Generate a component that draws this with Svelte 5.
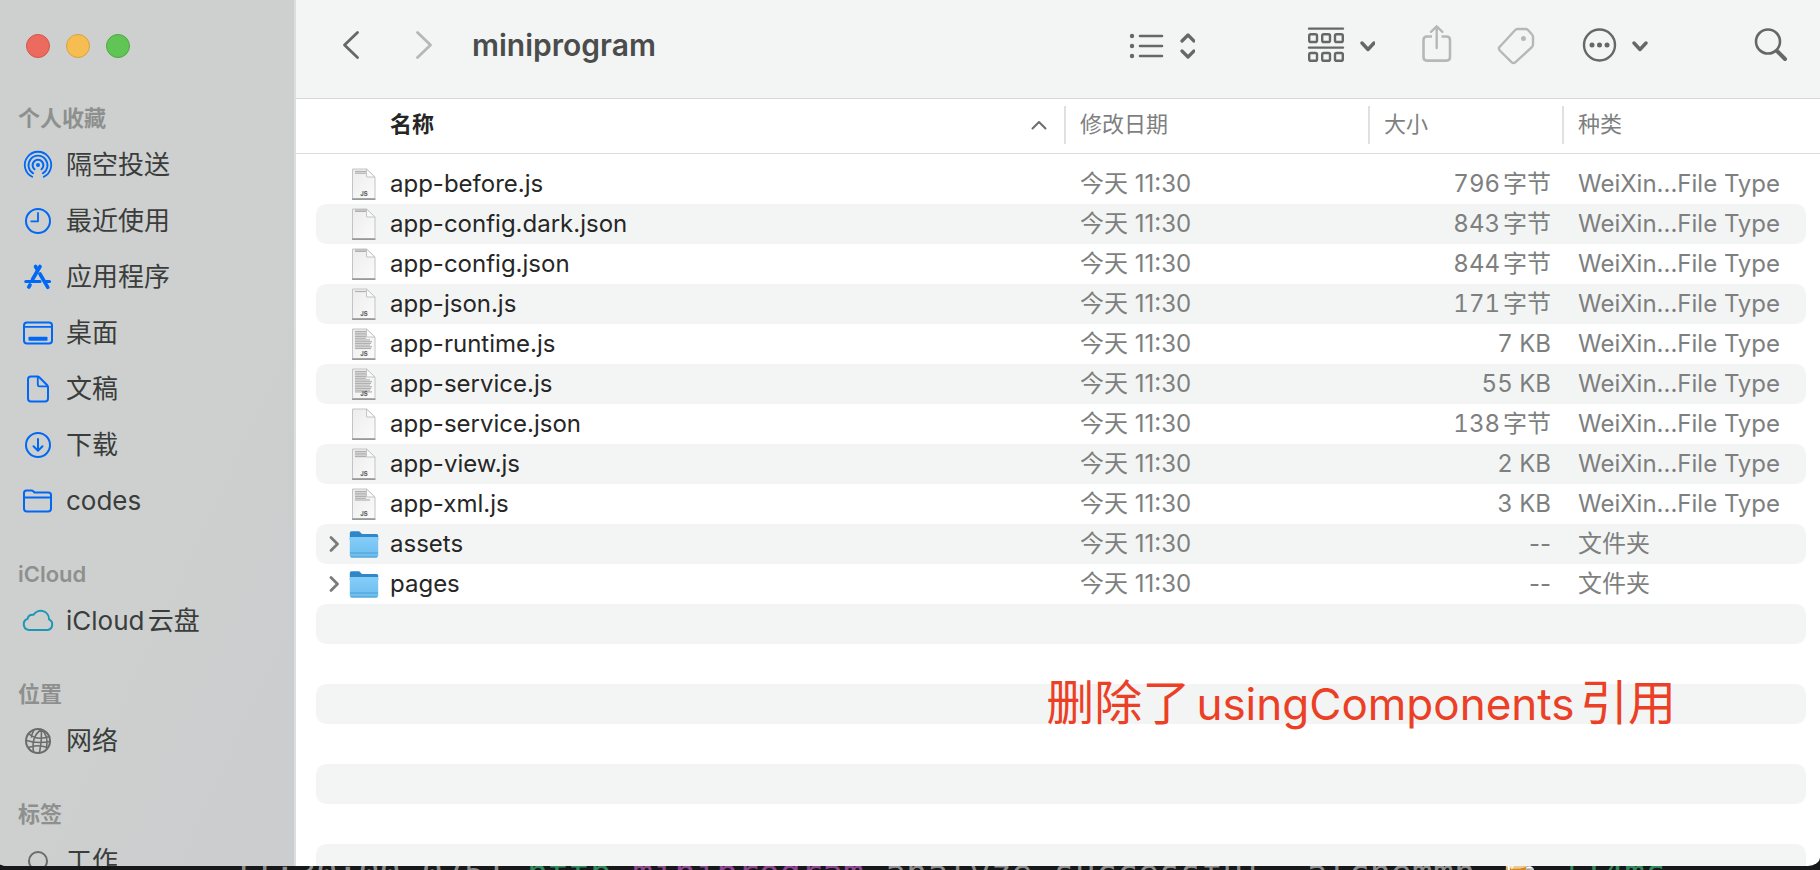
<script lang="ts">
	interface SidebarItem {
		icon: string
		label: string
	}

	interface SidebarSection {
		title: string
		items: SidebarItem[]
	}

	interface Entry {
		name: string
		type: 'js' | 'json' | 'folder'
		lines?: number
		modified: string
		size: string
		kind: string
	}

	const sections: SidebarSection[] = [
		{
			title: '个人收藏',
			items: [
				{ icon: 'airdrop', label: '隔空投送' },
				{ icon: 'recents', label: '最近使用' },
				{ icon: 'apps', label: '应用程序' },
				{ icon: 'desktop', label: '桌面' },
				{ icon: 'documents', label: '文稿' },
				{ icon: 'downloads', label: '下载' },
				{ icon: 'folder', label: 'codes' },
			],
		},
		{ title: 'iCloud', items: [{ icon: 'cloud', label: 'iCloud云盘' }] },
		{ title: '位置', items: [{ icon: 'network', label: '网络' }] },
		{ title: '标签', items: [{ icon: 'tag', label: '工作' }] },
	]

	const today = '今天 11:30'
	const wxType = 'WeiXin...File Type'

	const entries: Entry[] = [
		{ name: 'app-before.js', type: 'js', lines: 2, modified: today, size: '796字节', kind: wxType },
		{ name: 'app-config.dark.json', type: 'json', lines: 2, modified: today, size: '843字节', kind: wxType },
		{ name: 'app-config.json', type: 'json', lines: 2, modified: today, size: '844字节', kind: wxType },
		{ name: 'app-json.js', type: 'js', lines: 1, modified: today, size: '171字节', kind: wxType },
		{ name: 'app-runtime.js', type: 'js', lines: 11, modified: today, size: '7 KB', kind: wxType },
		{ name: 'app-service.js', type: 'js', lines: 13, modified: today, size: '55 KB', kind: wxType },
		{ name: 'app-service.json', type: 'json', lines: 0, modified: today, size: '138字节', kind: wxType },
		{ name: 'app-view.js', type: 'js', lines: 4, modified: today, size: '2 KB', kind: wxType },
		{ name: 'app-xml.js', type: 'js', lines: 6, modified: today, size: '3 KB', kind: wxType },
		{ name: 'assets', type: 'folder', modified: today, size: '--', kind: '文件夹' },
		{ name: 'pages', type: 'folder', modified: today, size: '--', kind: '文件夹' },
	]

	// blank striped rows below the last entry
	const fillerRows = Array.from({ length: 7 })
</script>

<div class="screen">
	<div class="window">
		<aside class="sidebar">
			<div class="lights">
				<button class="light close" aria-label="关闭"></button>
				<button class="light minimize" aria-label="最小化"></button>
				<button class="light zoom" aria-label="缩放"></button>
			</div>
			<nav>
				{#each sections as section}
					<section>
						<h2>{section.title}</h2>
						<ul>
							{#each section.items as item}
								<li>
									<a href="#{item.icon}">
										{@render sidebarIcon(item.icon)}
										<span>{item.label}</span>
									</a>
								</li>
							{/each}
						</ul>
					</section>
				{/each}
			</nav>
		</aside>

		<main>
			<header class="toolbar">
				<div class="history">
					<button aria-label="后退">
						<svg class="icon" width="18" height="44" viewBox="0 0 18 44">
							<path d="M15.5 9.5 L2.5 22 L15.5 34.5" stroke-width="2.8" />
						</svg>
					</button>
					<button aria-label="前进" disabled>
						<svg class="icon" width="18" height="44" viewBox="0 0 18 44">
							<path d="M2.5 9.5 L15.5 22 L2.5 34.5" stroke-width="2.8" />
						</svg>
					</button>
				</div>
				<h1>miniprogram</h1>
				<button class="view" aria-label="列表显示">
					<svg class="icon" width="66" height="44" viewBox="0 0 66 44">
						<g fill="currentColor" stroke="none">
							<circle cx="3" cy="13" r="2.2" />
							<circle cx="3" cy="23" r="2.2" />
							<circle cx="3" cy="33" r="2.2" />
						</g>
						<path d="M11 13 H33 M11 23 H33 M11 33 H33" stroke-width="2.6" />
						<path d="M53 18 L59 12 L65 18 M53 28 L59 34 L65 28" stroke-width="3.2" />
					</svg>
				</button>
				<div class="actions">
					<button aria-label="分组">
						<svg class="icon" width="68" height="44" viewBox="0 0 68 44">
							<path d="M2 5.6 H36 M2 24.6 H36" stroke-width="2.4" />
							<g stroke-width="2.4">
								{#each [11.2, 30] as y}
									{#each [2.2, 15.2, 28] as x}
										<rect {x} {y} width="7.8" height="7.8" rx="1.6" />
									{/each}
								{/each}
							</g>
							<path d="M55 20 L61 26.5 L67 20" stroke-width="3.4" />
						</svg>
					</button>
					<button aria-label="共享" disabled>
						<svg class="icon" width="32" height="44" viewBox="0 0 32 44">
							<path
								d="M12 13.5 H7 Q3.5 13.5 3.5 17 V34 Q3.5 37.6 7 37.6 H26.5 Q30 37.6 30 34 V17 Q30 13.5 26.5 13.5 H21.5"
								stroke-width="2.6"
								stroke-linecap="butt"
							/>
							<path d="M16.7 3.5 V25 M11 8.8 L16.7 3.3 L22.4 8.8" stroke-width="2.4" />
						</svg>
					</button>
					<button aria-label="标签" disabled>
						<svg class="icon" width="40" height="44" viewBox="0 0 40 44">
							<path
								d="M20.5 6 H28.5 Q30 6 31 7 L35 11.5 Q36 12.5 36 14 V21.5 Q36 23 35 24 L18.5 39.2 Q16.5 41 14.5 39.2 L2.8 27.5 Q1 25.5 2.8 23.7 L18 7.2 Q19 6 20.5 6 Z"
								stroke-width="2.4"
							/>
							<circle cx="26.5" cy="15.5" r="2.5" fill="currentColor" stroke="none" />
						</svg>
					</button>
					<button aria-label="操作">
						<svg class="icon" width="66" height="44" viewBox="0 0 66 44">
							<circle cx="17.5" cy="22" r="15.5" stroke-width="2.4" />
							<g fill="currentColor" stroke="none">
								<circle cx="10" cy="22" r="2.5" />
								<circle cx="17.5" cy="22" r="2.5" />
								<circle cx="25" cy="22" r="2.5" />
							</g>
							<path d="M52 20 L58 26.5 L64 20" stroke-width="3.4" />
						</svg>
					</button>
				</div>
				<button class="search" aria-label="搜索">
					<svg class="icon" width="34" height="44" viewBox="0 0 34 44">
						<circle cx="14" cy="18.5" r="12" stroke-width="2.6" />
						<path d="M23 28 L31 36" stroke-width="4" />
					</svg>
				</button>
			</header>

			<table>
				<thead>
					<tr>
						<th class="col-name" aria-sort="ascending">
							<div class="head">
								<span>名称</span>
								<svg class="icon" width="18" height="12" viewBox="0 0 18 12">
									<path d="M2.5 10.5 L9 4 L15.5 10.5" />
								</svg>
							</div>
						</th>
						<th class="col-date"><div class="head">修改日期</div></th>
						<th class="col-size"><div class="head">大小</div></th>
						<th class="col-kind"><div class="head">种类</div></th>
					</tr>
				</thead>
				<tbody>
					{#each entries as entry}
						<tr>
							<td>
								<div class="name">
									{#if entry.type === 'folder'}
										<button class="disclosure" aria-label="展开 {entry.name}">
											<svg class="icon" width="12" height="20" viewBox="0 0 12 20">
												<path d="M3 3.5 L9.5 10 L3 16.5" stroke-width="2.8" />
											</svg>
										</button>
										{@render folderIcon()}
									{:else}
										<span class="disclosure"></span>
										{@render fileIcon(entry.type === 'js', entry.lines ?? 0)}
									{/if}
									<span>{entry.name}</span>
								</div>
							</td>
							<td>{entry.modified}</td>
							<td class="size" class:numeric={entry.type !== 'folder'}>{entry.size}</td>
							<td>{entry.kind}</td>
						</tr>
					{/each}
					{#each fillerRows as _}
						<tr aria-hidden="true"><td></td><td></td><td></td><td></td></tr>
					{/each}
				</tbody>
			</table>

			<p class="annotation">删除了<span>usingComponents</span>引用</p>
		</main>
	</div>

	<div class="terminal" aria-hidden="true">
		<div class="line">
			<span>11:30:00.0751</span>
			<span class="green">http</span>
			<span class="purple">miniprogram</span>
			<span>analyze successful, alchemmn 🍺</span>
			<span class="green">+14ms</span>
		</div>
	</div>
</div>

{#snippet sidebarIcon(name: string)}
	<svg class="icon side-icon {name}" width="32" height="32" viewBox="0 0 32 32">
		{#if name === 'airdrop'}
			<circle cx="16" cy="16" r="2" fill="currentColor" stroke="none" />
			<path d="M12.5 20.3 A5.4 5.4 0 1 1 19.5 20.3" />
			<path d="M11.2 24.4 A9.5 9.5 0 1 1 20.8 24.4" stroke-width="1.8" />
			<path d="M10.2 27.8 A13.2 13.2 0 1 1 21.8 27.8" stroke-width="1.8" />
		{:else if name === 'recents'}
			<circle cx="16" cy="16" r="12" />
			<path d="M16 7.8 V16.3 H9.2" stroke-width="1.8" />
		{:else if name === 'apps'}
			<path
				d="M18 5.5 L10.5 18.5 M8 24 L6.8 26 M13.5 5.5 L15.5 9 M18 13 L25.8 26.3"
				stroke-width="3.6"
			/>
			<path d="M3.8 20.5 H18 M24 20.5 H27.5" stroke-width="3.2" />
		{:else if name === 'desktop'}
			<rect x="2" y="5.5" width="28" height="21" rx="3" />
			<path d="M2 9.8 H30" stroke-width="1.8" />
			<rect x="6.5" y="19.8" width="19" height="4" rx="0.8" fill="currentColor" stroke="none" />
		{:else if name === 'documents'}
			<path
				d="M9 3.5 H15.5 Q16.5 3.5 17.5 4.5 L25 12 Q26 13 26 14.5 V25.5 Q26 28.5 23 28.5 H9 Q6 28.5 6 25.5 V6.5 Q6 3.5 9 3.5 Z"
			/>
			<path d="M15.8 4 V11.5 Q15.8 13.3 17.5 13.3 H25.5" stroke-width="1.8" />
		{:else if name === 'downloads'}
			<circle cx="16" cy="16" r="12" />
			<path d="M16 10 V21.5 M11.5 17.3 L16 21.8 L20.5 17.3" />
		{:else if name === 'folder'}
			<path
				d="M2 8 Q2 5.5 4.5 5.5 H9.5 Q10.5 5.5 11.5 6.5 L12.5 7.5 H26.5 Q29 7.5 29 10 V23.5 Q29 26.5 26 26.5 H5 Q2 26.5 2 23.5 Z"
			/>
			<path d="M2 12.5 H29" stroke-width="1.8" />
		{:else if name === 'cloud'}
			<path
				d="M6.8 25 A5.8 5.8 0 0 1 5.6 13.8 Q6.5 9.2 11.6 9.8 A8.3 8.3 0 0 1 27 14.4 A5.6 5.6 0 0 1 25.5 25 Z"
			/>
		{:else if name === 'network'}
			<circle cx="16" cy="16" r="12" />
			<path
				d="M19.5 4.5 Q9 11 11.5 27 M19.5 4.5 Q20 16 17.5 28 M12 5 Q9.5 9 9.5 12 M19.5 4.5 Q27 11 24.5 23 M7 9 Q15 16 27.5 11.5 M4.5 15.5 Q15 19 28 16.5 M6.5 22.5 Q15 19 25.5 22.5"
				stroke-width="1.6"
			/>
		{:else}
			<circle cx="16" cy="16" r="9" />
		{/if}
	</svg>
{/snippet}

{#snippet fileIcon(js: boolean, lines: number)}
	<svg class="file" width="30" height="36" viewBox="0 0 30 36">
		<defs>
			<linearGradient id="paper" x1="0" y1="0" x2="1" y2="1">
				<stop offset="0" stop-color="#ececec" />
				<stop offset="1" stop-color="#fbfbfb" />
			</linearGradient>
		</defs>
		<path d="M3.5 3 H17.5 L26 11 V32.5 H3.5 Z" fill="url(#paper)" stroke="#c4c4c4" />
		<path d="M3 33.2 H26.5" stroke="#8f8f8f" stroke-width="1.4" />
		{#each { length: lines } as _, i}
			<path
				d="M6 {js ? 5.5 + i * 1.7 : 4 + i * 1.4} H{i < 5 ? 17 : 23 - (i % 3)}"
				stroke="#b0b0b0"
				stroke-width="1.2"
			/>
		{/each}
		<path d="M17.5 3 V11 H26 Z" fill="#fafafa" stroke="#c4c4c4" />
		{#if js}
			<text x="15" y="29.5" text-anchor="middle">JS</text>
		{/if}
	</svg>
{/snippet}

{#snippet folderIcon()}
	<svg class="file" width="30" height="36" viewBox="0 0 30 36">
		<defs>
			<linearGradient id="folder-front" x1="0" y1="0" x2="0" y2="1">
				<stop offset="0" stop-color="#85cdf9" />
				<stop offset="1" stop-color="#6bbdee" />
			</linearGradient>
		</defs>
		<path
			d="M0.8 7 Q0.8 5.3 2.5 5.3 H9.5 Q10.5 5.3 11.5 6.5 L13 8 H27.5 Q29.2 8 29.2 9.5 V14 H0.8 Z"
			fill="#2f87c9"
		/>
		<path
			d="M0.8 12 Q0.8 11 2 11 H28 Q29.2 11 29.2 12 V29.5 Q29.2 31.4 27.5 31.4 H2.5 Q0.8 31.4 0.8 29.5 Z"
			fill="url(#folder-front)"
		/>
		<path d="M1 27 H29 M2 31 H28" stroke="#4c9fd3" />
	</svg>
{/snippet}

<style>
	:global(body) {
		margin: 0;
		background: #17181a;
	}

	.screen {
		height: 100vh;
		display: flex;
		flex-direction: column;
		overflow: hidden;
		background: #17181a;
		font-family: Inter, 'Noto Sans CJK SC', sans-serif;
		text-autospace: normal;
	}

	.window {
		flex: 1;
		min-height: 0;
		display: flex;
		overflow: hidden;
		background: #fff;
		border-radius: 0 0 12px 12px / 0 0 9px 2px;
	}

	button {
		padding: 0;
		border: 0;
		background: none;
		color: inherit;
		font: inherit;
		display: block;
	}

	.icon {
		display: block;
		fill: none;
		stroke: currentColor;
		stroke-width: 2;
		stroke-linecap: round;
		stroke-linejoin: round;
	}

	.sidebar {
		flex: 0 0 294px;
		overflow: hidden;
		background: linear-gradient(115deg, #cdd0ce 60%, #cccdcf 85%);
		border-right: 2px solid #dcdddd;
	}

	.lights {
		display: flex;
		gap: 16px;
		padding: 34px 26px 41px;
	}

	.light {
		box-sizing: border-box;
		width: 24px;
		height: 24px;
		border-radius: 50%;
	}

	.close {
		background: #ed6a5f;
		border: 1px solid #d5544a;
	}

	.minimize {
		background: #f6be50;
		border: 1px solid #d9a13d;
	}

	.zoom {
		background: #61c555;
		border: 1px solid #4fa73f;
	}

	section {
		margin-bottom: 26px;
	}

	h2 {
		margin: 0;
		padding-left: 18px;
		font-size: 22px;
		line-height: 38px;
		font-weight: 600;
		color: #8e908f;
	}

	ul {
		margin: 0;
		padding: 0;
		list-style: none;
	}

	.sidebar a {
		display: flex;
		align-items: center;
		gap: 12px;
		height: 56px;
		padding-left: 22px;
		font-size: 26px;
		line-height: 32px;
		color: #3b3d3c;
		text-decoration: none;
	}

	.side-icon {
		color: #0068f5;
	}

	.side-icon.cloud {
		color: #1b98b4;
	}

	.side-icon.network,
	.side-icon.tag {
		color: #6a6c6b;
	}

	main {
		flex: 1;
		min-width: 0;
		position: relative;
		overflow: hidden;
	}

	.toolbar {
		box-sizing: border-box;
		height: 99px;
		display: flex;
		align-items: center;
		padding: 0 32px 8px 46px;
		background: #f3f5f4;
		border-bottom: 1px solid #d7d8d8;
		color: #666867;
	}

	.toolbar button:disabled {
		color: #b6b8b7;
	}

	.history {
		display: flex;
		gap: 55px;
	}

	h1 {
		flex: 1;
		margin: 0 0 0 39px;
		font-size: 30px;
		line-height: 36px;
		font-weight: 600;
		color: #4b4d4c;
	}

	.actions {
		display: flex;
		gap: 45px;
		margin: 0 106px 0 112px;
	}

	table {
		width: 100%;
		table-layout: fixed;
		border-spacing: 0;
		font-size: 24px;
		line-height: 30px;
		color: #7e7f7f;
	}

	th {
		box-sizing: border-box;
		height: 55px;
		padding: 7px 0 0;
		border-bottom: 1px solid #dcdcdc;
		font-size: 22px;
		font-weight: 400;
		text-align: left;
		vertical-align: top;
	}

	.col-date {
		width: 304px;
	}

	.col-size {
		width: 194px;
	}

	.col-kind {
		width: 258px;
	}

	.head {
		box-sizing: border-box;
		display: flex;
		align-items: center;
		height: 38px;
		padding: 0 0 2px 14px;
		border-left: 2px solid #e0e0e0;
	}

	.col-name .head {
		justify-content: space-between;
		padding: 0 16px 2px 94px;
		border-left: 0;
		font-weight: 600;
		color: #262626;
	}

	.col-name .icon {
		color: #6d6d6d;
	}

	tbody::before {
		content: '';
		display: table-row;
		height: 10px;
	}

	td {
		box-sizing: border-box;
		height: 40px;
		padding: 0 0 0 16px;
		white-space: nowrap;
	}

	/* transparent side borders keep the stripes off the pane's edges */
	td:first-child {
		padding-left: 12px;
		border-left: 20px solid transparent;
		border-radius: 30px 0 0 30px / 10px;
		background-clip: padding-box;
	}

	td:last-child {
		border-right: 14px solid transparent;
		border-radius: 0 24px 24px 0 / 10px;
		background-clip: padding-box;
	}

	tbody tr:nth-child(even) td {
		background-color: #f3f5f4;
	}

	td.size {
		padding-right: 11px;
		text-align: right;
	}

	td.numeric {
		font-variant-numeric: tabular-nums;
	}

	.name {
		display: flex;
		align-items: center;
		color: #262626;
	}

	.disclosure {
		width: 12px;
		color: #7b7b7b;
	}

	.file {
		display: block;
		margin: 0 11px 0 9px;
	}

	.file text {
		font-size: 6px;
		font-weight: 700;
		fill: #555;
	}

	.annotation {
		position: absolute;
		right: 144px;
		bottom: 128px;
		margin: 0;
		font-size: 48px;
		line-height: 68px;
		white-space: nowrap;
		color: #eb4026;
	}

	.annotation span {
		font-size: 44px;
	}

	.terminal {
		flex: 0 0 4px;
		overflow: hidden;
	}

	.line {
		display: flex;
		gap: 21px;
		padding-left: 232px;
		margin-top: -11px;
		font-family: 'DejaVu Sans Mono', monospace;
		font-size: 35px;
		line-height: 36px;
		white-space: nowrap;
		color: #8d8d8d;
	}

	.green {
		color: #31885a;
	}

	.purple {
		color: #8f4793;
	}
</style>
